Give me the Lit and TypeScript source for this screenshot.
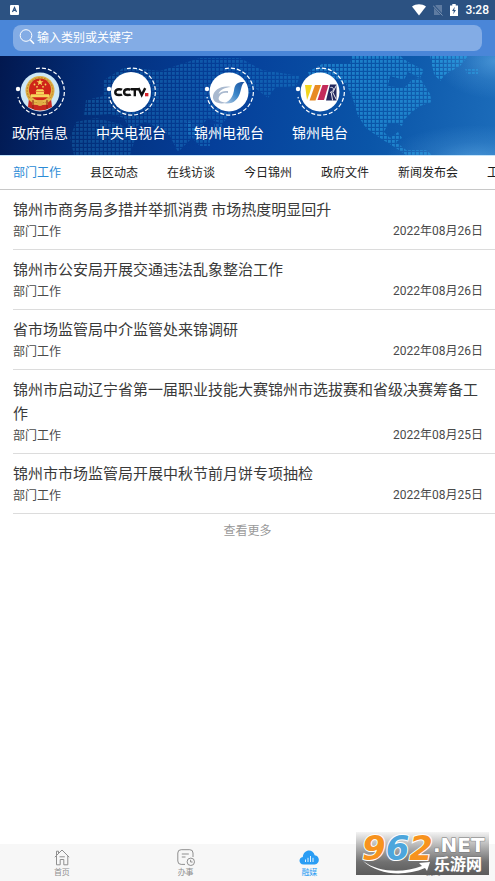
import { LitElement, html, svg, css } from "lit";
import { customElement, property, state } from "lit/decorators.js";
import { classMap } from "lit/directives/class-map.js";

const base = css`
  :host {
    display: block;
    box-sizing: border-box;
  }
  * {
    box-sizing: border-box;
  }
  button {
    font: inherit;
    color: inherit;
    background: none;
    border: 0;
    padding: 0;
    margin: 0;
    cursor: pointer;
  }
  a {
    color: inherit;
    text-decoration: none;
  }
  svg {
    display: block;
  }
`;

@customElement("status-bar")
class StatusBar extends LitElement {
  static styles = [
    base,
    css`
      :host {
        display: flex;
        align-items: center;
        height: 20px;
        padding: 0 6px 0 10px;
        background: #2c5282;
        color: #fff;
        font: 500 12px/20px Roboto, "Noto Sans", sans-serif;
      }
      .right {
        display: flex;
        align-items: center;
        gap: 7px;
        margin-left: auto;
      }
    `,
  ];
  render() {
    return html`
      <svg width="10" height="10" viewBox="0 0 10 10" aria-hidden="true">
        <rect width="9" height="10" rx="1" fill="#fff" />
        <path d="M2.5 7L4.5 2.5L6.5 7M3.2 5.4H5.8" fill="none" stroke="#2c5282" stroke-width="1.2" />
      </svg>
      <div class="right">
        <svg width="14" height="12" viewBox="0 0 14 12" aria-hidden="true">
          <path d="M0 2.6C4 -.4 10 -.4 14 2.6L7 11.5Z" fill="#fff" />
        </svg>
        <svg width="10" height="12" viewBox="0 0 10 12" aria-hidden="true">
          <path d="M3 1H9V11H1V3Z" fill="#5e7ba1" />
          <path d="M0 1L10 12" stroke="#2c5282" stroke-width="2.4" />
          <path d="M0 1.5L9.5 11.5" stroke="#8198b6" stroke-width="1" />
        </svg>
        <svg width="8" height="12" viewBox="0 0 8 12" aria-hidden="true">
          <path d="M0 1.5H2.3V0H5.7V1.5H8V12H0Z" fill="#fff" />
          <path d="M4.8 2.8L2 7H3.8L3.2 10.2L6 6H4.2Z" fill="#2c5282" />
        </svg>
        <span>3:28</span>
      </div>
    `;
  }
}

@customElement("search-bar")
class SearchBar extends LitElement {
  static styles = [
    base,
    css`
      :host {
        padding: 5px 13px;
        background: #4a86d8;
      }
      .box {
        display: flex;
        align-items: flex-start;
        gap: 2px;
        height: 26px;
        padding: 0 6px;
        border-radius: 8px;
        background: #83ace5;
      }
      .glass {
        margin-top: 4px;
      }
      .input {
        flex: 1;
        min-width: 0;
        height: 24px;
        padding: 0;
        border: 0;
        outline: 0;
        background: none;
        color: #fff;
        font: 12px/24px "Noto Sans CJK SC", sans-serif;
      }
      .input::placeholder {
        color: #fff;
        opacity: 1;
      }
    `,
  ];
  render() {
    return html`
      <label class="box">
        <svg class="glass" width="16" height="16" viewBox="0 0 16 16" aria-hidden="true" fill="none" stroke="#fff">
          <circle cx="7" cy="6.5" r="5.8" />
          <path d="M11.2 10.8L15 14.8" stroke-width="1.6" />
        </svg>
        <input class="input" type="text" aria-label="搜索" placeholder="输入类别或关键字" />
      </label>
    `;
  }
}

const emblem = svg`
  <circle cx="25" cy="25" r="19.5" fill="#cfe8f6" />
  <path d="M14 31H36L37 40Q25 47 13 40Z" fill="#c9281f" />
  <circle cx="25" cy="23.5" r="14.5" fill="#dfae45" />
  <circle cx="25" cy="23.5" r="12.8" fill="none" stroke="#b98425" stroke-dasharray="2 1.2" />
  <circle cx="25" cy="22.5" r="11" fill="#cf2418" />
  <path d="M25 11.8L25.9 14.3H28.5L26.4 15.8L27.2 18.3L25 16.8L22.8 18.3L23.6 15.8L21.5 14.3H24.1Z" fill="#f6d65b" />
  <g fill="#f6d65b">
    <circle cx="19.5" cy="17.5" r=".9" /><circle cx="22" cy="19.8" r=".9" />
    <circle cx="28" cy="19.8" r=".9" /><circle cx="30.5" cy="17.5" r=".9" />
    <path d="M20.5 24.5L22 22.3H28L29.5 24.5ZM21 25H29V27H21ZM16 27.3H34V30.2H16Z" />
  </g>
  <path d="M14 32Q25 37 36 32M17 37H33" fill="none" stroke="#e7bd4e" stroke-width="1.6" />
  <circle cx="25" cy="36" r="3" fill="#dfae45" />
  <path d="M18 33V42M32 33V42" stroke="#8f1c14" stroke-width="1" />
`;

const cctv = svg`
  <circle cx="25" cy="25" r="20" fill="#fff" />
  <g fill="none" stroke="#111" stroke-width="2.4">
    <path d="M16 22.8Q15.3 22.3 13 22.3C8 22.3 8 28 13 28Q15.3 28 16 27.5" />
    <path d="M24.7 22.8Q24 22.3 21.7 22.3C16.9 22.3 16.9 28 21.7 28Q24 28 24.7 27.5" />
    <path d="M25 22.3H32.5M28.8 22.3V29.2M32.4 21.1L35.7 28L39.2 21.1" />
  </g>
  <rect x="39" y="26" width="3.4" height="3.3" fill="#d8232a" />
`;

const jztv = svg`
  <defs>
    <linearGradient id="swoosh" x1="1" y1="0" x2="0" y2="1">
      <stop offset="0" stop-color="#1b4f9c" /><stop offset=".5" stop-color="#3a86c8" /><stop offset="1" stop-color="#b9cbe0" />
    </linearGradient>
  </defs>
  <circle cx="25" cy="25" r="19.5" fill="#fff" />
  <path d="M27 20C17 18 10 23 9 29C8 35 15 38 23 35.5C16 35.5 13 33 15.5 29C17.5 26 20 25.5 24 26V24C20 23.5 17 24.5 14.5 27C16 22.5 21 20.5 27 20Z" fill="#a9b9cf" />
  <path d="M40.5 15C34 14.5 31 17 30.2 22C29.3 29 27 33 20.5 36.3C29 38 34 32 36 26C37.6 21 37.5 17.5 40.5 15Z" fill="url(#swoosh)" />
`;

const radio = svg`
  <circle cx="25" cy="25" r="19.5" fill="#fff" />
  <path d="M10 18H17L15 25L12 33Z" fill="#f3d51c" />
  <path d="M20 18H26L20.5 33.5H14.5Z" fill="#e88a24" />
  <path d="M27.5 18H33.5L29 33H22.5Z" fill="#c32a5a" />
  <path d="M35 17.5H41.5V33.5H31Z" fill="#23285e" />
  <path d="M35.5 20.5C39.5 19.5 39.5 24.5 35 25.5M36.2 25.3L37.6 33.5M41.3 18.5L37.8 25.5L41.3 32.5" fill="none" stroke="#fff" stroke-width=".9" />
`;

const channels = [
  { name: "政府信息", art: emblem },
  { name: "中央电视台", art: cctv },
  { name: "锦州电视台", art: jztv },
  { name: "锦州电台", art: radio },
];

@customElement("channel-banner")
class ChannelBanner extends LitElement {
  static styles = [
    base,
    css`
      :host {
        display: grid;
        overflow: hidden;
        background: linear-gradient(100deg, #02184f 0%, #03317f 22%, #053f9a 45%, #0a55a8 75%, #1c6cba 100%);
        color: #fff;
        border-bottom: 1px solid #c3e4fb;
      }
      .map,
      .list {
        grid-area: 1 / 1;
      }
      .map {
        width: 100%;
        height: 100%;
        min-height: 0;
      }
      .list {
        z-index: 1;
        display: flex;
        gap: 28px;
        padding: 11px 12px 13px;
      }
      .channel {
        display: flex;
        flex-direction: column;
        align-items: center;
        gap: 6px;
        font: 14px/18px "Noto Sans CJK SC", sans-serif;
        white-space: nowrap;
      }
    `,
  ];
  render() {
    return html`
      <svg class="map" viewBox="0 0 495 99" preserveAspectRatio="xMidYMid slice" aria-hidden="true">
        <defs>
          <pattern id="cells" width="4" height="4" patternUnits="userSpaceOnUse">
            <rect width="2.8" height="2.8" fill="#2ba4e6" />
          </pattern>
          <radialGradient id="glow">
            <stop offset="0" stop-color="#70baf0" stop-opacity=".5" />
            <stop offset=".5" stop-color="#70baf0" stop-opacity=".18" />
            <stop offset="1" stop-color="#70baf0" stop-opacity="0" />
          </radialGradient>
        </defs>
        <ellipse cx="495" cy="5" rx="60" ry="38" fill="url(#glow)" />
        <ellipse cx="475" cy="103" rx="90" ry="34" fill="url(#glow)" />
        <g fill="url(#cells)">
          <path
            opacity=".28"
            d="M104 24L125 11L160 15L200 2H240L262 14L300 20L296 30L275 32L268 42L255 32L243 44L232 56L222 68L208 62L200 72L190 84L178 96L170 80L158 72L145 66L130 74L124 62L110 58L84 60L86 44L104 40Z"
          />
          <path opacity=".24" d="M76 66L96 62L120 68L136 80L130 99H74L70 82Z" />
          <path opacity=".3" d="M186 66H192V72H200V82H210V90H200L188 78ZM214 68H222V80H214Z" />
          <path
            opacity=".55"
            d="M308 16L322 8L350 8L352 0H400L408 6L424 14L420 22L408 16L404 24L390 20L388 30L404 32L412 24L420 22L430 38L432 46L420 50L412 56L404 64L402 70L398 68L388 68L384 76L390 82L398 76L402 82L396 86L406 94H426L432 99H406L396 92L380 82L366 72L358 60L352 40L346 28L330 20L312 26Z"
          />
          <path opacity=".65" d="M430 0H468L460 10L446 18L440 25L434 18Z" />
          <path opacity=".5" d="M465 13H478V18H467Z" />
        </g>
      </svg>
      <nav class="list" aria-label="频道">
        ${channels.map(
          (c) => html`
            <a class="channel" href="#">
              <svg width="50" height="50" viewBox="0 0 50 50" aria-hidden="true">
                <path d="M21 1.6A23.5 23.5 0 1 1 3 30" fill="none" stroke="#fff" stroke-width="1.2" stroke-dasharray="4 2" />
                ${c.art}
                <circle cx="3" cy="22" r="2.2" fill="#fff" />
              </svg>
              ${c.name}
            </a>
          `
        )}
      </nav>
    `;
  }
}

@customElement("category-tabs")
class CategoryTabs extends LitElement {
  static styles = [
    base,
    css`
      :host {
        display: flex;
        gap: 29px;
        height: 34px;
        padding: 0 13px;
        overflow: hidden;
        border-bottom: 1px solid #c8c8c8;
        background: #fff;
        color: #1c1c1c;
        font: 12px/32px "Noto Sans CJK SC", sans-serif;
      }
      .tab {
        flex: none;
        height: 32px;
        white-space: nowrap;
      }
      .active {
        color: #2b8bd6;
      }
    `,
  ];
  @state() private current = 0;
  private names = ["部门工作", "县区动态", "在线访谈", "今日锦州", "政府文件", "新闻发布会", "工作动态"];
  render() {
    return this.names.map(
      (name, i) => html`
        <button class=${classMap({ tab: true, active: i === this.current })} @click=${() => (this.current = i)}>${name}</button>
      `
    );
  }
}

@customElement("news-item")
class NewsItem extends LitElement {
  @property() heading = "";
  @property() source = "";
  @property() date = "";
  static styles = [
    base,
    css`
      :host {
        display: flex;
        flex-direction: column;
        gap: 1px;
        margin-left: 13px;
        padding: 7px 12px 9px 0;
        border-bottom: 1px solid #dcdcdc;
        color: #3a3a3a;
        font-family: "Noto Sans CJK SC", sans-serif;
      }
      .title {
        font-size: 15px;
        line-height: 24px;
      }
      .meta {
        display: flex;
        justify-content: space-between;
        font-size: 12px;
        line-height: 18px;
        color: #4a4a4a;
      }
      .date {
        font-family: Roboto, "Noto Sans CJK SC", sans-serif;
      }
    `,
  ];
  render() {
    return html`
      <a class="title" href="#">${this.heading}</a>
      <div class="meta"><span>${this.source}</span><time class="date">${this.date}</time></div>
    `;
  }
}

const house = svg`
  <path d="M.8 8.2L8 1L15.2 8.2M2.5 7V15.8H6.2V10.5H9.8V15.8H13.8V7M2.5 6V2.2H4.5V4M5.5 7.8H10.8" />
`;
const affairs = svg`
  <path d="M8 15.4H4.2Q.8 15.4 .8 12V4Q.8 .7 4.2 .7H12.8Q16 .7 16 4V8M4.8 5H11.8M4.8 8H8.5" />
  <circle cx="13.8" cy="12.8" r="3.7" /><path d="M13.6 10.8V13H15.6" />
`;
const cloud = svg`
  <path d="M4.6 15.5C-.6 15.3 -.8 8.7 3.8 8C4.4 .2 14 -.8 15.7 6.2C21 6.2 21.4 15 15.8 15.5Z" fill="#2a9df4" stroke="none" />
  <path d="M6.5 13V10.5M9 13V8.8M11.5 13V7M14 13V8.8" stroke="#dff1ff" />
`;
const person = svg`
  <circle cx="9" cy="4.5" r="3.7" /><path d="M1.5 15.5C2 7 16 7 16.5 15.5Z" />
`;

@customElement("bottom-nav")
class BottomNav extends LitElement {
  static styles = [
    base,
    css`
      :host {
        display: flex;
        height: 37px;
        background: #f7f7f7;
        color: #8f8f8f;
        font: 8px/12px "Noto Sans CJK SC", sans-serif;
      }
      .item {
        flex: 1;
        display: flex;
        flex-direction: column;
        align-items: center;
        padding-top: 5px;
      }
      .active {
        color: #2a9df4;
      }
    `,
  ];
  private items = [
    { name: "首页", art: house, w: 16 },
    { name: "办事", art: affairs, w: 18 },
    { name: "融媒", art: cloud, w: 20 },
    { name: "我的", art: person, w: 18 },
  ];
  render() {
    return this.items.map(
      (it, i) => html`
        <a class=${classMap({ item: true, active: i === 2 })} href="#">
          <svg width=${it.w} height="17" viewBox="0 0 ${it.w} 17" fill="none" stroke="currentColor" stroke-width="1" aria-hidden="true">
            ${it.art}
          </svg>
          ${it.name}
        </a>
      `
    );
  }
}

@customElement("site-mark")
class SiteMark extends LitElement {
  static styles = [
    base,
    css`
      :host {
        display: grid;
        grid-template-columns: 77px 1fr;
        width: 133px;
        height: 43px;
        background: linear-gradient(#f4f4f4, #b0b0b0 35%, #707070 70%, #5b5b5b);
        white-space: nowrap;
      }
      .digits {
        grid-area: 1 / 1;
        padding-left: 6px;
        font: italic 700 34px/32px "DejaVu Sans", sans-serif;
        color: #f7931e;
        -webkit-text-stroke: 2px #fff;
        paint-order: stroke fill;
      }
      .blue {
        color: #4da6dc;
      }
      .swoosh {
        grid-area: 1 / 1;
      }
      .words {
        display: flex;
        flex-direction: column;
        padding-top: 4px;
        color: #fff;
        -webkit-text-stroke: 1px #777;
        paint-order: stroke fill;
      }
      .net {
        font: 700 20px/19px "DejaVu Sans", sans-serif;
      }
      .name {
        padding-left: 1px;
        font: 700 16px/17px "Noto Sans CJK SC", sans-serif;
      }
    `,
  ];
  render() {
    return html`
      <div class="digits">9<span class="blue">6</span>2</div>
      <svg class="swoosh" width="77" height="43" viewBox="0 0 77 43" aria-hidden="true">
        <path d="M7 29C23 41 48 41 66 34L63 31L74 30L71 39L69 36C48 45 22 43 7 29Z" fill="#fff" />
      </svg>
      <div class="words"><span class="net">.NET</span><span class="name">乐游网</span></div>
    `;
  }
}

const news = [
  ["锦州市商务局多措并举抓消费 市场热度明显回升", "2022年08月26日"],
  ["锦州市公安局开展交通违法乱象整治工作", "2022年08月26日"],
  ["省市场监管局中介监管处来锦调研", "2022年08月26日"],
  ["锦州市启动辽宁省第一届职业技能大赛锦州市选拔赛和省级决赛筹备工作", "2022年08月25日"],
  ["锦州市市场监管局开展中秋节前月饼专项抽检", "2022年08月25日"],
];

@customElement("app-root")
class AppRoot extends LitElement {
  static styles = [
    base,
    css`
      :host {
        position: relative;
        display: flex;
        flex-direction: column;
        min-height: 100vh;
        background: #fff;
      }
      .feed {
        flex: 1;
        display: flex;
        flex-direction: column;
      }
      .more {
        align-self: center;
        margin-top: 7px;
        color: #999;
        font: 12px/18px "Noto Sans CJK SC", sans-serif;
      }
      .mark {
        position: absolute;
        right: 6px;
        bottom: 6px;
        z-index: 2;
      }
    `,
  ];
  render() {
    return html`
      <status-bar></status-bar>
      <search-bar></search-bar>
      <channel-banner></channel-banner>
      <category-tabs></category-tabs>
      <main class="feed">
        ${news.map(([heading, date]) => html`<news-item .heading=${heading} .source=${"部门工作"} .date=${date}></news-item>`)}
        <button class="more">查看更多</button>
      </main>
      <bottom-nav></bottom-nav>
      <site-mark class="mark"></site-mark>
    `;
  }
}
